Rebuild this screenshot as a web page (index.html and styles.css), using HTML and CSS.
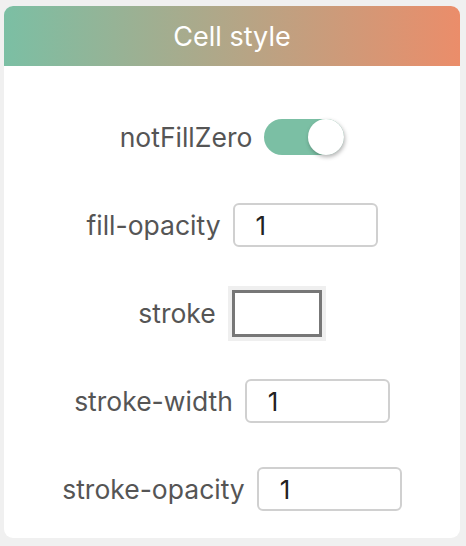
FILE: index.html
```html
<!DOCTYPE html>
<html>
<head>
<meta charset="utf-8">
<link rel="stylesheet" href="styles.css">
</head>
<body>
<div class="card">
  <div class="header">Cell style</div>
  <div class="body">
    <div class="row">
      <span class="label">notFillZero</span>
      <span class="toggle"><span class="knob"></span></span>
    </div>
    <div class="row">
      <span class="label">fill-opacity</span>
      <span class="input">1</span>
    </div>
    <div class="row">
      <span class="label">stroke</span>
      <span class="color"><span class="swatch"></span></span>
    </div>
    <div class="row">
      <span class="label">stroke-width</span>
      <span class="input">1</span>
    </div>
    <div class="row">
      <span class="label">stroke-opacity</span>
      <span class="input">1</span>
    </div>
  </div>
</div>
</body>
</html>
```
FILE: styles.css
```css
html, body { margin: 0; padding: 0; }
body {
  background: #f0f0f0;
  width: 466px;
  height: 546px;
  font-family: Inter, "Liberation Sans", sans-serif;
  padding: 6px 6px 0 4px;
  box-sizing: border-box;
}
.card {
  background: #fff;
  border-radius: 9px;
  overflow: hidden;
  height: 532px;
}
.header {
  height: 60px;
  background: linear-gradient(to right, #7bbfa4, #eb8d6a);
  color: #fff;
  font-size: 27px;
  display: flex;
  align-items: center;
  justify-content: center;
}
.body {
  display: flex;
  flex-direction: column;
  padding-top: 49px;
  gap: 44px;
}
.row {
  display: flex;
  align-items: center;
  justify-content: center;
  gap: 12px;
  height: 44px;
}
.label {
  font-size: 26.5px;
  color: #555;
}
.toggle {
  width: 80px;
  height: 36px;
  border-radius: 18px;
  background: #7bbfa4;
  position: relative;
}
.knob {
  position: absolute;
  right: 0;
  top: 0;
  width: 36px;
  height: 36px;
  border-radius: 50%;
  background: #fff;
  box-shadow: 1px 2px 4px rgba(0,0,0,0.3);
}
.input {
  width: 145px;
  height: 44px;
  box-sizing: border-box;
  border: 2px solid #d0d0d0;
  border-radius: 6px;
  padding-left: 21px;
  font-size: 26px;
  color: #222;
  display: flex;
  align-items: center;
}
.color {
  width: 98px;
  height: 55px;
  box-sizing: border-box;
  background: #efefef;
  padding: 4px;
  display: flex;
}
.swatch {
  flex: 1;
  border: 3px solid #777;
  background: #fff;
}
```
